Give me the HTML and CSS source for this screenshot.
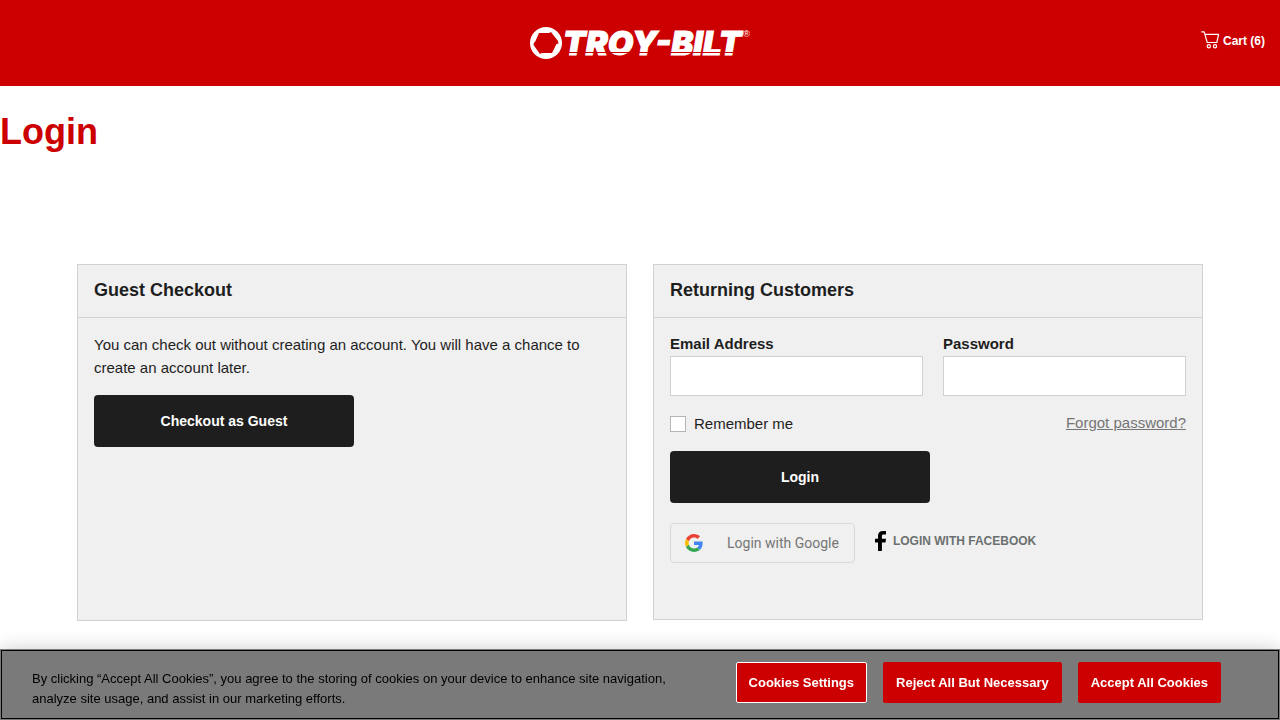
FILE: index.html
```html
<!DOCTYPE html>
<html lang="en">
<head>
<meta charset="utf-8">
<meta name="viewport" content="width=device-width, initial-scale=1">
<title>Login | Troy-Bilt</title>
<link rel="stylesheet" href="styles.css">
</head>
<body>
<header class="site-header">
  <a class="brand" href="#" aria-label="Troy-Bilt home">
    <svg class="brand-mark" viewBox="0 0 32 32" aria-hidden="true">
      <circle cx="16" cy="16" r="16" fill="#fff"/>
      <path fill="#c00" d="M9 6L19 6L21 5L28 14L28.500 16.500L26.500 17L22 26L12 26L10 27L3.500 18L4 15.500L5 15Z"/>
    </svg>
    <span class="brand-name">TROY-BILT</span>
    <span class="brand-reg">®</span>
  </a>
  <a class="cart" href="#">
    <svg class="cart-icon" viewBox="0 0 19 18" aria-hidden="true" fill="none" stroke="#fff" stroke-width="1.200" stroke-linecap="round" stroke-linejoin="round">
      <path d="M.6.8H3.200L6.200 11.500H15.800L17.600 3.300H4"/>
      <circle cx="7.800" cy="15.200" r="1.600"/>
      <circle cx="14" cy="15.200" r="1.600"/>
    </svg>
    <span>Cart (6)</span>
  </a>
</header>

<main>
  <h1 class="page-title">Login</h1>
  <div class="panels">
    <section class="panel panel-guest">
      <h2 class="panel-title">Guest Checkout</h2>
      <div class="panel-body">
        <p class="guest-text">You can check out without creating an account. You will have a chance to create an account later.</p>
        <button class="btn" type="button">Checkout as Guest</button>
      </div>
    </section>
    <section class="panel">
      <h2 class="panel-title">Returning Customers</h2>
      <form class="panel-body">
        <div class="fields">
          <div class="field">
            <label for="email">Email Address</label>
            <input id="email" type="email">
          </div>
          <div class="field">
            <label for="password">Password</label>
            <input id="password" type="password">
          </div>
        </div>
        <div class="options">
          <label class="remember" for="remember"><input id="remember" type="checkbox">Remember me</label>
          <a class="forgot" href="#">Forgot password?</a>
        </div>
        <button class="btn" type="button">Login</button>
        <div class="social">
          <button class="google" type="button">
            <svg class="google-icon" viewBox="0 0 48 48" aria-hidden="true">
              <path fill="#EA4335" d="M24 9.500c3.540 0 6.710 1.220 9.210 3.600l6.850-6.850C35.900 2.380 30.470 0 24 0 14.620 0 6.510 5.380 2.560 13.220l7.980 6.190C12.430 13.720 17.740 9.500 24 9.500z"/>
              <path fill="#4285F4" d="M46.980 24.550c0-1.570-.15-3.090-.38-4.550H24v9.020h12.940c-.58 2.960-2.260 5.480-4.780 7.180l7.730 6c4.510-4.180 7.090-10.360 7.090-17.650z"/>
              <path fill="#FBBC05" d="M10.530 28.590c-.48-1.450-.76-2.990-.76-4.590s.27-3.140.76-4.590l-7.980-6.190C.92 16.460 0 20.120 0 24c0 3.880.92 7.540 2.560 10.780l7.970-6.190z"/>
              <path fill="#34A853" d="M24 48c6.480 0 11.930-2.130 15.890-5.810l-7.730-6c-2.150 1.450-4.920 2.300-8.160 2.300-6.260 0-11.570-4.220-13.470-9.910l-7.980 6.190C6.510 42.620 14.620 48 24 48z"/>
            </svg>
            <span>Login with Google</span>
          </button>
          <button class="facebook" type="button">
            <svg class="facebook-icon" viewBox="0 0 12 20" aria-hidden="true">
              <path d="M4 20V11.400H1V7.700H4V5C4 1.700 5.800 0 8.800 0H12V3.500H9.700C8.300 3.500 7.900 4.100 7.900 5.300V7.700H12L11.500 11.400H7.900V20Z"/>
            </svg>
            <span>LOGIN WITH FACEBOOK</span>
          </button>
        </div>
      </form>
    </section>
  </div>
</main>

<aside class="cookies" aria-label="Cookie notice">
  <p class="cookies-text">By clicking “Accept All Cookies”, you agree to the storing of cookies on your device to enhance site navigation, analyze site usage, and assist in our marketing efforts.</p>
  <div class="cookies-actions">
    <button class="cookie-btn cookie-btn-outlined" type="button">Cookies Settings</button>
    <button class="cookie-btn" type="button">Reject All But Necessary</button>
    <button class="cookie-btn" type="button">Accept All Cookies</button>
  </div>
</aside>
</body>
</html>
```
FILE: styles.css
```css
* { box-sizing: border-box; }

body {
  margin: 0;
  background: #fff;
  color: #1e1e1e;
  font: 15px/23px "Liberation Sans", Arial, sans-serif;
}

button { font-family: inherit; cursor: pointer; }

.site-header {
  display: grid;
  grid-template-columns: 1fr auto 1fr;
  align-items: center;
  min-height: 86px;
  padding: 0 15px;
  background: #c00;
}

.brand {
  grid-column: 2;
  display: flex;
  align-items: center;
  color: #fff;
  text-decoration: none;
}

.brand-mark { width: 32px; height: 32px; margin-right: 1px; }

.brand-name {
  position: relative;
  font: italic 900 33px/32px Inter, sans-serif;
  -webkit-text-stroke: 1px #fff;
}

.brand-name::after {
  content: "";
  position: absolute;
  left: 0;
  right: 0;
  bottom: 6px;
  height: 1px;
  background: #c00;
}

.brand-reg { align-self: flex-start; margin-left: 2px; font-size: 9px; line-height: 14px; }

.cart {
  display: flex;
  justify-self: end;
  align-items: flex-start;
  gap: 3px;
  padding-bottom: 4px;
  color: #fff;
  font-size: 12px;
  font-weight: 700;
  line-height: 20px;
  text-decoration: none;
}

.cart-icon { width: 19px; height: 18px; }

.page-title {
  margin: 24px 0 110px;
  color: #c00;
  font-size: 36px;
  line-height: 44px;
}

.panels {
  display: grid;
  grid-template-columns: 1fr 1fr;
  gap: 26px;
  align-items: start;
  margin: 0 77px 100px;
}

.panel {
  min-height: 356px;
  border: 1px solid #d1d1d1;
  background: #f0f0f0;
}

.panel-guest { min-height: 357px; }

.panel-title {
  margin: 0;
  padding: 12px 16px 14px;
  border-bottom: 1px solid #d1d1d1;
  font-size: 18px;
  line-height: 26px;
}

.panel-body { padding: 15px 16px; }

.guest-text { margin: 0 0 16px; }

.btn {
  display: block;
  width: 260px;
  height: 52px;
  border: 0;
  border-radius: 4px;
  background: #1e1e1e;
  color: #fff;
  font-size: 14px;
  font-weight: 700;
}

.fields {
  display: grid;
  grid-template-columns: 253fr 243fr;
  gap: 20px;
}

.field label {
  display: block;
  margin-bottom: 1px;
  font-weight: 700;
  line-height: 22px;
}

.field input {
  display: block;
  width: 100%;
  height: 40px;
  padding: 0 12px;
  border: 1px solid #d1d1d1;
  border-radius: 0;
  background: #fff;
  font: inherit;
}

.options {
  display: flex;
  justify-content: space-between;
  align-items: flex-start;
  padding: 15px 0 16px;
}

.remember { display: flex; align-items: center; gap: 8px; padding-top: 1px; }

.remember input {
  appearance: none;
  width: 16px;
  height: 16px;
  margin: 0;
  border: 1px solid #b5b5b5;
  background: #fff;
}

.forgot { color: #757575; }

.social {
  display: flex;
  align-items: center;
  gap: 19px;
  padding-top: 20px;
}

.google {
  display: flex;
  align-items: center;
  gap: 24px;
  height: 40px;
  padding: 0 15px 0 14px;
  border: 1px solid #d9d9d9;
  border-radius: 4px;
  background: transparent;
  color: #757575;
  font: 14px/20px Roboto, sans-serif;
}

.google-icon { width: 18px; height: 18px; }

.facebook {
  display: flex;
  align-items: center;
  gap: 7px;
  padding: 0 0 5px;
  border: 0;
  background: none;
  color: #6b706f;
  font-size: 12px;
  font-weight: 700;
}

.facebook-icon { width: 12px; height: 20px; fill: #000; }

.cookies {
  position: fixed;
  right: 0;
  bottom: 0;
  left: 0;
  display: flex;
  justify-content: space-between;
  align-items: flex-start;
  padding: 13px 59px 11px 32px;
  outline: 1px solid #000;
  outline-offset: -2px;
  background: #7a7a7a;
  box-shadow: 0 0 18px rgba(0, 0, 0, .2);
}

.cookies-text {
  flex: 0 1 660px;
  margin: 0;
  padding-top: 7px;
  color: #000;
  font-size: 13px;
  line-height: 20px;
}

.cookies-actions { display: flex; flex-shrink: 0; gap: 16px; }

.cookie-btn {
  height: 41px;
  padding: 0 12px;
  border: 1px solid #c00;
  border-radius: 2px;
  background: #c00;
  color: #fff;
  font-size: 13px;
  font-weight: 700;
}

.cookie-btn-outlined { border-color: #fff; }
```
